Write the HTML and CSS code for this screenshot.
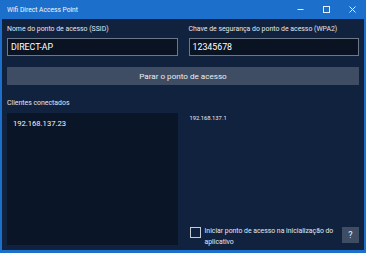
FILE: index.html
```html
<!DOCTYPE html>
<html lang="pt">
<head>
<meta charset="utf-8">
<title>Wifi Direct Access Point</title>
<link rel="stylesheet" href="styles.css">
</head>
<body>
<div class="window">
  <div class="titlebar">
    <span class="title">Wifi Direct Access Point</span>
    <div class="controls">
      <span class="ctl"><svg width="7" height="7" viewBox="0 0 7 7"><path d="M0.5 3.5H6.5" stroke="#e8eef8" stroke-width="1"/></svg></span>
      <span class="ctl"><svg width="7" height="7" viewBox="0 0 7 7"><rect x="0.5" y="0.5" width="6" height="6" fill="none" stroke="#e8eef8" stroke-width="1"/></svg></span>
      <span class="ctl"><svg width="7" height="7" viewBox="0 0 7 7"><path d="M0.5 0.5L6.5 6.5M6.5 0.5L0.5 6.5" stroke="#e8eef8" stroke-width="1"/></svg></span>
    </div>
  </div>
  <div class="content">
    <div class="fields">
      <div class="field">
        <div class="label">Nome do ponto de acesso (SSID)</div>
        <div class="textbox">DIRECT-AP</div>
      </div>
      <div class="field">
        <div class="label">Chave de segurança do ponto de acesso (WPA2)</div>
        <div class="textbox">12345678</div>
      </div>
    </div>
    <div class="btn">Parar o ponto de acesso</div>
    <div class="lower">
      <div class="col">
        <div class="label">Clientes conectados</div>
        <div class="listbox">
          <div class="item">192.168.137.23</div>
        </div>
      </div>
      <div class="col right">
        <div class="ip">192.168.137.1</div>
        <div class="bottomrow">
          <span class="box"></span>
          <span class="checktext">Iniciar ponto de acesso na inicialização do<br>aplicativo</span>
          <span class="help">?</span>
        </div>
      </div>
    </div>
  </div>
</div>
</body>
</html>
```

FILE: styles.css
```css
html, body {
  margin: 0;
  padding: 0;
  background: #11223f;
}
.window {
  width: 366px;
  height: 253px;
  box-sizing: border-box;
  border: 2px solid #1c6fcb;
  border-top: 0;
  border-bottom-width: 3px;
  background: #11223f;
  font-family: Roboto, "Open Sans", sans-serif;
  color: #e2e6ec;
  display: flex;
  flex-direction: column;
  overflow: hidden;
}
.titlebar {
  height: 19px;
  flex: none;
  background: #1c6fcb;
  display: flex;
  align-items: center;
  justify-content: space-between;
  padding-left: 5px;
}
.title {
  font-size: 6.7px;
  color: #f4f7fc;
}
.controls {
  display: flex;
  height: 19px;
  margin-right: -1px;
}
.ctl {
  width: 26px;
  height: 19px;
  display: flex;
  align-items: center;
  justify-content: center;
}
.ctl svg { display: block; }
.content {
  flex: 1;
  display: flex;
  flex-direction: column;
  padding: 6px 5px 5px 5px;
}
.fields, .lower {
  display: grid;
  grid-template-columns: 1fr 1fr;
  column-gap: 11px;
}
.label {
  font-size: 6.9px;
  line-height: 8px;
  height: 8px;
  white-space: nowrap;
  color: #e2e6ec;
}
.textbox {
  margin-top: 5px;
  height: 18px;
  box-sizing: border-box;
  border: 1px solid #6c7889;
  background: #0a1322;
  color: #ffffff;
  font-size: 8.8px;
  line-height: 16px;
  padding-left: 3px;
}
.btn {
  margin-top: 11px;
  height: 18px;
  background: #3e4c64;
  color: #eceef2;
  font-size: 8.1px;
  line-height: 18px;
  text-align: center;
}
.lower {
  margin-top: 14px;
  flex: 1;
}
.col {
  display: flex;
  flex-direction: column;
}
.listbox {
  margin-top: 6px;
  flex: 1;
  background: #0a1528;
  padding: 6px 6px;
}
.item {
  font-size: 7.6px;
  line-height: 10px;
  color: #f2f4f8;
}
.ip {
  margin-top: 15px;
  padding-left: 1px;
  font-size: 5.8px;
  line-height: 8px;
  color: #eceef2;
}
.bottomrow {
  margin-top: auto;
  height: 18px;
  display: flex;
  align-items: flex-start;
}
.box {
  width: 11px;
  height: 11px;
  box-sizing: border-box;
  border: 1.5px solid #c5cad3;
  margin-left: 1px;
  flex: none;
}
.checktext {
  margin-left: 4px;
  margin-top: -1px;
  font-size: 6.85px;
  line-height: 11px;
  white-space: nowrap;
  color: #e6e9ee;
}
.help {
  margin-left: auto;
  width: 17px;
  height: 16px;
  background: #3e4c64;
  color: #f0f2f6;
  font-size: 9px;
  line-height: 16px;
  text-align: center;
}
```
